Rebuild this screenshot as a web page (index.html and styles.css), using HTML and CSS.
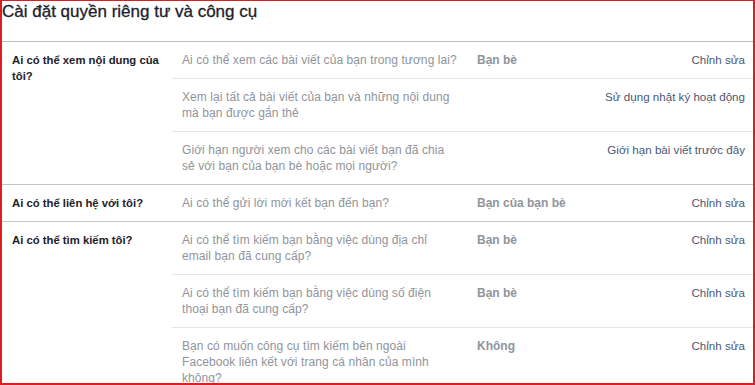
FILE: index.html
```html
<!DOCTYPE html>
<html lang="vi">
<head>
    <meta charset="UTF-8">
    <meta name="viewport" content="width=device-width, initial-scale=1.0">
    <title>Cài đặt quyền riêng tư và công cụ</title>
    <link rel="stylesheet" href="styles.css">
</head>
<body>
    <div class="frame">
        <div class="page-header">
            <h1>Cài đặt quyền riêng tư và công cụ</h1>
        </div>

        <!-- Nội dung -->
        <div class="section">
            <div class="section-label">Ai có thể xem nội dung của tôi?</div>
            <div class="section-rows">
                <div class="row">
                    <div class="question">Ai có thể xem các bài viết của bạn trong tương lai?</div>
                    <div class="value">Bạn bè</div>
                    <a class="action" href="#">Chỉnh sửa</a>
                </div>
                <div class="row">
                    <div class="question">Xem lại tất cả bài viết của bạn và những nội dung mà bạn được gắn thẻ</div>
                    <div class="value"></div>
                    <a class="action" href="#">Sử dụng nhật ký hoạt động</a>
                </div>
                <div class="row">
                    <div class="question">Giới hạn người xem cho các bài viết bạn đã chia sẻ với bạn của bạn bè hoặc mọi người?</div>
                    <div class="value"></div>
                    <a class="action" href="#">Giới hạn bài viết trước đây</a>
                </div>
            </div>
        </div>

        <!-- Liên hệ -->
        <div class="section">
            <div class="section-label">Ai có thể liên hệ với tôi?</div>
            <div class="section-rows">
                <div class="row">
                    <div class="question">Ai có thể gửi lời mời kết bạn đến bạn?</div>
                    <div class="value">Bạn của bạn bè</div>
                    <a class="action" href="#">Chỉnh sửa</a>
                </div>
            </div>
        </div>

        <!-- Tìm kiếm -->
        <div class="section">
            <div class="section-label">Ai có thể tìm kiếm tôi?</div>
            <div class="section-rows">
                <div class="row">
                    <div class="question">Ai có thể tìm kiếm bạn bằng việc dùng địa chỉ email bạn đã cung cấp?</div>
                    <div class="value">Bạn bè</div>
                    <a class="action" href="#">Chỉnh sửa</a>
                </div>
                <div class="row">
                    <div class="question">Ai có thể tìm kiếm bạn bằng việc dùng số điện thoại bạn đã cung cấp?</div>
                    <div class="value">Bạn bè</div>
                    <a class="action" href="#">Chỉnh sửa</a>
                </div>
                <div class="row">
                    <div class="question">Bạn có muốn công cụ tìm kiếm bên ngoài Facebook liên kết với trang cá nhân của mình không?</div>
                    <div class="value">Không</div>
                    <a class="action" href="#">Chỉnh sửa</a>
                </div>
            </div>
        </div>
    </div>
</body>
</html>
```

FILE: styles.css
```css
body {
    margin: 0;
    font-family: 'Liberation Sans', Arial, sans-serif;
    font-size: 12px;
    line-height: 16px;
    color: #1d2129;
    background-color: #fff;
}

.frame {
    box-sizing: border-box;
    width: 755px;
    height: 385px;
    overflow: hidden;
    border: 2px solid #e01b22;
    border-top-width: 1px;
}

.page-header {
    height: 40px;
    border-bottom: 1px solid #bdbdbd;
}

.page-header h1 {
    margin: 0;
    font-size: 17px;
    line-height: 22px;
    font-weight: normal;
    color: #1d2129;
    -webkit-text-stroke: 0.3px #1d2129;
}

.section {
    display: grid;
    grid-template-columns: 170px 1fr;
    border-top: 1px solid #c4c4c4;
}

.page-header + .section {
    border-top: none;
}

.section-label {
    padding: 10px 10px 10px 10px;
    font-size: 11.3px;
    font-weight: bold;
}

.row {
    display: grid;
    grid-template-columns: 305px 1fr auto;
    padding: 10px 8px 10px 0;
    border-top: 1px solid #e5e5e5;
}

.row:first-child {
    border-top: none;
}

.question {
    padding: 0 20px 0 10px;
    letter-spacing: 0.08px;
    color: #90949c;
}

.value {
    font-weight: bold;
    color: #90949c;
}

.action {
    font-size: 11.6px;
    color: #4a5775;
    text-decoration: none;
    text-align: right;
}
```
